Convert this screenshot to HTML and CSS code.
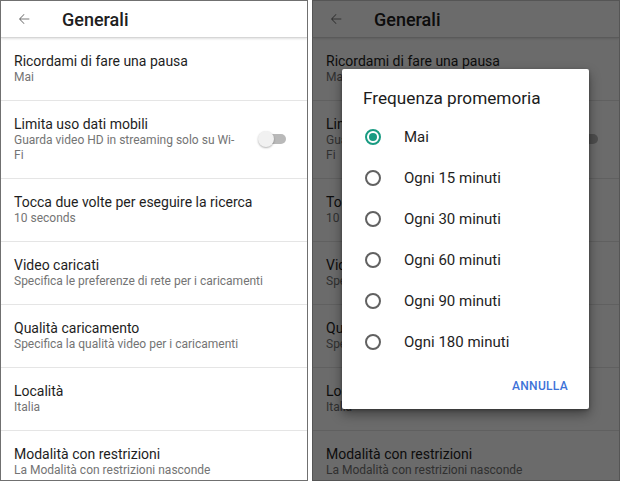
FILE: index.html
```html
<!DOCTYPE html>
<html lang="it">
<head>
<meta charset="utf-8">
<title>Generali</title>
<link rel="stylesheet" href="styles.css">
</head>
<body>
<div class="phone">
  <div class="appbar">
    <svg class="back" viewBox="0 0 24 24" width="16" height="16"><path d="M20 11.2H6.9l5.9-5.9-0.9-0.9L4.4 12l7.5 7.6 0.9-0.9-5.9-5.9H20z" fill="#7a7a7a"/></svg>
    <span class="appbar-title">Generali</span>
  </div>
  <div class="list">
    <div class="row"><div class="text"><div class="title">Ricordami di fare una pausa</div><div class="sub">Mai</div></div></div>
    <div class="row row-toggle"><div class="text narrow"><div class="title">Limita uso dati mobili</div><div class="sub">Guarda video HD in streaming solo su Wi-Fi</div></div><span class="toggle"><span class="track"></span><span class="thumb"></span></span></div>
    <div class="row"><div class="text"><div class="title">Tocca due volte per eseguire la ricerca</div><div class="sub">10 seconds</div></div></div>
    <div class="row"><div class="text"><div class="title">Video caricati</div><div class="sub">Specifica le preferenze di rete per i caricamenti</div></div></div>
    <div class="row"><div class="text"><div class="title">Qualità caricamento</div><div class="sub">Specifica la qualità video per i caricamenti</div></div></div>
    <div class="row"><div class="text"><div class="title">Località</div><div class="sub">Italia</div></div></div>
    <div class="row"><div class="text"><div class="title">Modalità con restrizioni</div><div class="sub">La Modalità con restrizioni nasconde</div></div></div>
  </div>
</div>
<div class="phone phone-dim">
  <div class="appbar">
    <svg class="back" viewBox="0 0 24 24" width="16" height="16"><path d="M20 11.2H6.9l5.9-5.9-0.9-0.9L4.4 12l7.5 7.6 0.9-0.9-5.9-5.9H20z" fill="#7a7a7a"/></svg>
    <span class="appbar-title">Generali</span>
  </div>
  <div class="list">
    <div class="row"><div class="text"><div class="title">Ricordami di fare una pausa</div><div class="sub">Mai</div></div></div>
    <div class="row row-toggle"><div class="text narrow"><div class="title">Limita uso dati mobili</div><div class="sub">Guarda video HD in streaming solo su Wi-Fi</div></div><span class="toggle"><span class="track"></span><span class="thumb"></span></span></div>
    <div class="row"><div class="text"><div class="title">Tocca due volte per eseguire la ricerca</div><div class="sub">10 seconds</div></div></div>
    <div class="row"><div class="text"><div class="title">Video caricati</div><div class="sub">Specifica le preferenze di rete per i caricamenti</div></div></div>
    <div class="row"><div class="text"><div class="title">Qualità caricamento</div><div class="sub">Specifica la qualità video per i caricamenti</div></div></div>
    <div class="row"><div class="text"><div class="title">Località</div><div class="sub">Italia</div></div></div>
    <div class="row"><div class="text"><div class="title">Modalità con restrizioni</div><div class="sub">La Modalità con restrizioni nasconde</div></div></div>
  </div>
  <div class="scrim"></div>
  <div class="dialog">
    <div class="dialog-title">Frequenza promemoria</div>
    <div class="options">
      <div class="option"><span class="radio checked"></span><span class="label">Mai</span></div>
      <div class="option"><span class="radio"></span><span class="label">Ogni 15 minuti</span></div>
      <div class="option"><span class="radio"></span><span class="label">Ogni 30 minuti</span></div>
      <div class="option"><span class="radio"></span><span class="label">Ogni 60 minuti</span></div>
      <div class="option"><span class="radio"></span><span class="label">Ogni 90 minuti</span></div>
      <div class="option"><span class="radio"></span><span class="label">Ogni 180 minuti</span></div>
    </div>
    <div class="actions"><span class="btn">ANNULLA</span></div>
  </div>
</div>
</body>
</html>
```
FILE: styles.css
```css
html, body {
  margin: 0;
  padding: 0;
}
body {
  width: 620px;
  height: 482px;
  display: flex;
  gap: 4px;
  background: #fff;
  font-family: Roboto, "Noto Sans", sans-serif;
  color: #212121;
  overflow: hidden;
}
.phone {
  position: relative;
  width: 308px;
  height: 481px;
  box-sizing: border-box;
  border: 1px solid #707070;
  background: #fff;
  overflow: hidden;
}
.phone-dim {
  border-color: #555;
}
.appbar {
  height: 37px;
  box-sizing: border-box;
  display: flex;
  align-items: center;
  border-bottom: 1px solid #d6d6d6;
  box-shadow: 0 1px 2px rgba(0,0,0,0.12);
  position: relative;
  z-index: 1;
  background: #fff;
}
.back {
  margin-left: 15px;
  flex: none;
}
.appbar-title {
  margin-left: 30px;
  font-size: 18px;
  font-weight: 500;
  color: #202020;
  padding-top: 1px;
}
.row {
  padding: 14px 14px 15px 13px;
  border-bottom: 1px solid #e5e5e5;
}
.row-toggle {
  display: flex;
  align-items: center;
  justify-content: space-between;
  padding-right: 21px;
}
.text.narrow {
  width: 226px;
}
.title {
  font-size: 14px;
  line-height: 18px;
  color: #1e1e1e;
}
.sub {
  font-size: 12px;
  line-height: 15px;
  color: #747474;
}
.toggle {
  position: relative;
  width: 28px;
  height: 16px;
  flex: none;
}
.track {
  position: absolute;
  left: 5px;
  right: 0;
  top: 3px;
  height: 10px;
  border-radius: 5px;
  background: #b9b9b9;
}
.thumb {
  position: absolute;
  left: 0;
  top: 0;
  width: 16px;
  height: 16px;
  border-radius: 50%;
  background: #f1f1f1;
  box-shadow: 0 1px 2px rgba(0,0,0,0.3);
}
.scrim {
  position: absolute;
  inset: 0;
  background: rgba(0,0,0,0.58);
  z-index: 2;
}
.dialog {
  position: absolute;
  left: 29px;
  top: 68px;
  width: 247px;
  height: 340px;
  box-sizing: border-box;
  background: #fff;
  border-radius: 2px;
  box-shadow: 0 5px 12px rgba(0,0,0,0.4), 0 1px 3px rgba(0,0,0,0.3);
  z-index: 3;
  padding-top: 18px;
}
.dialog-title {
  padding-left: 21px;
  font-size: 17.2px;
  line-height: 22px;
  color: #1c1c1c;
}
.options {
  margin-top: 7px;
}
.option {
  height: 41px;
  display: flex;
  align-items: center;
  padding-left: 23px;
}
.radio {
  width: 16px;
  height: 16px;
  box-sizing: border-box;
  border: 2px solid #616161;
  border-radius: 50%;
  flex: none;
  display: flex;
  align-items: center;
  justify-content: center;
}
.radio.checked {
  border-color: #199b82;
}
.radio.checked::after {
  content: "";
  width: 8px;
  height: 8px;
  border-radius: 50%;
  background: #199b82;
}
.label {
  margin-left: 23px;
  font-size: 15px;
  color: #1e1e1e;
}
.actions {
  margin-top: 17px;
  display: flex;
  justify-content: flex-end;
  padding-right: 21px;
}
.btn {
  font-size: 12px;
  line-height: 14px;
  font-weight: 500;
  color: #3d72d8;
  letter-spacing: 0.3px;
}
```
